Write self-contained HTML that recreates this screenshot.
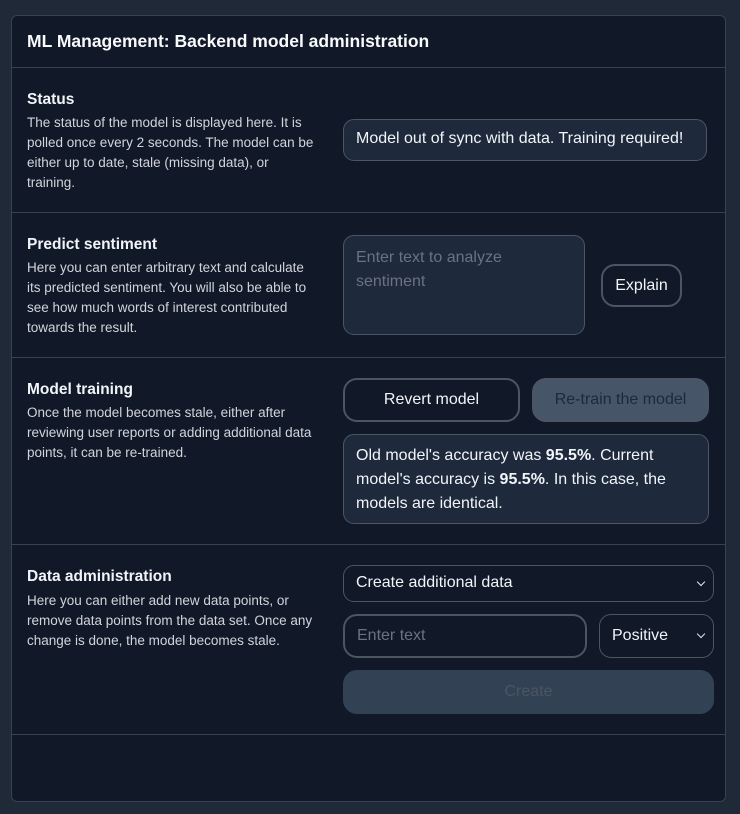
<!DOCTYPE html>
<html><head><meta charset="utf-8"><style>
*{box-sizing:border-box;margin:0;padding:0}
body{width:740px;height:814px;background:#1f2937;font-family:"Liberation Sans",sans-serif;color:#f1f5f9;position:relative;overflow:hidden}
.card{position:absolute;left:11px;top:15px;width:715px;height:787px;background:#111827;border:1px solid #374151;border-radius:6px}
.hr{position:absolute;left:11px;width:715px;height:1px;background:#374151}
h1{position:absolute;left:27px;top:31px;font-size:17.5px;font-weight:bold;color:#f8fafc}
.t{position:absolute;left:27px;font-size:15.5px;font-weight:bold}
.d{position:absolute;left:27px;width:288px;font-size:13.5px;line-height:20px;color:#d1d5db}
.box{position:absolute;border:1px solid #4b5563;border-radius:11px;background:#1e293b;font-size:16px}
.btn{position:absolute;border:2px solid #4b5563;border-radius:14px;font-size:16px;display:flex;align-items:center;justify-content:center}
.chev{position:absolute;right:9px;top:50%;margin-top:-5px;width:6px;height:6px;border-right:1.5px solid #e5e7eb;border-bottom:1.5px solid #e5e7eb;transform:rotate(45deg)}
</style></head><body>
<div class="card"></div>
<h1>ML Management: Backend model administration</h1>
<div class="hr" style="top:67px"></div>
<div class="t" style="top:91px">Status</div>
<div class="d" style="top:113px">The status of the model is displayed here. It is polled once every 2 seconds. The model can be either up to date, stale (missing data), or training.</div>
<div class="box" style="left:343px;top:119px;width:364px;height:42px;padding:10px 12px">Model out of sync with data. Training required!</div>
<div class="hr" style="top:212px"></div>
<div class="t" style="top:236px">Predict sentiment</div>
<div class="d" style="top:258px">Here you can enter arbitrary text and calculate its predicted sentiment. You will also be able to see how much words of interest contributed towards the result.</div>
<div class="box" style="left:343px;top:235px;width:242px;height:100px;padding:10px 12px;line-height:24px;color:#6b7280">Enter text to analyze sentiment</div>
<div class="btn" style="left:601px;top:264px;width:81px;height:43px">Explain</div>
<div class="hr" style="top:357px"></div>
<div class="t" style="top:381px">Model training</div>
<div class="d" style="top:403px">Once the model becomes stale, either after reviewing user reports or adding additional data points, it can be re-trained.</div>
<div class="btn" style="left:343px;top:378px;width:177px;height:44px">Revert model</div>
<div class="btn" style="left:532px;top:378px;width:177px;height:44px;background:#475569;color:#1e293b">Re-train the model</div>
<div class="box" style="left:343px;top:434px;width:366px;height:90px;padding:9px 12px;line-height:24px">Old model's accuracy was <b>95.5%</b>. Current model's accuracy is <b>95.5%</b>. In this case, the models are identical.</div>
<div class="hr" style="top:544px"></div>
<div class="t" style="top:568px">Data administration</div>
<div class="d" style="top:591px">Here you can either add new data points, or remove data points from the data set. Once any change is done, the model becomes stale.</div>
<div class="box" style="left:343px;top:565px;width:371px;height:37px;padding:8px 12px;background:#111827">Create additional data<span class="chev"></span></div>
<div class="btn" style="left:343px;top:614px;width:244px;height:44px;justify-content:flex-start;padding-left:12px;color:#6b7280">Enter text</div>
<div class="box" style="left:599px;top:614px;width:115px;height:44px;padding:12px 12px;background:#111827;border-radius:12px">Positive<span class="chev"></span></div>
<div class="btn" style="left:343px;top:670px;width:371px;height:44px;background:#334155;border-color:#334155;color:#4b5563">Create</div>
<div class="hr" style="top:734px"></div>
</body></html>
